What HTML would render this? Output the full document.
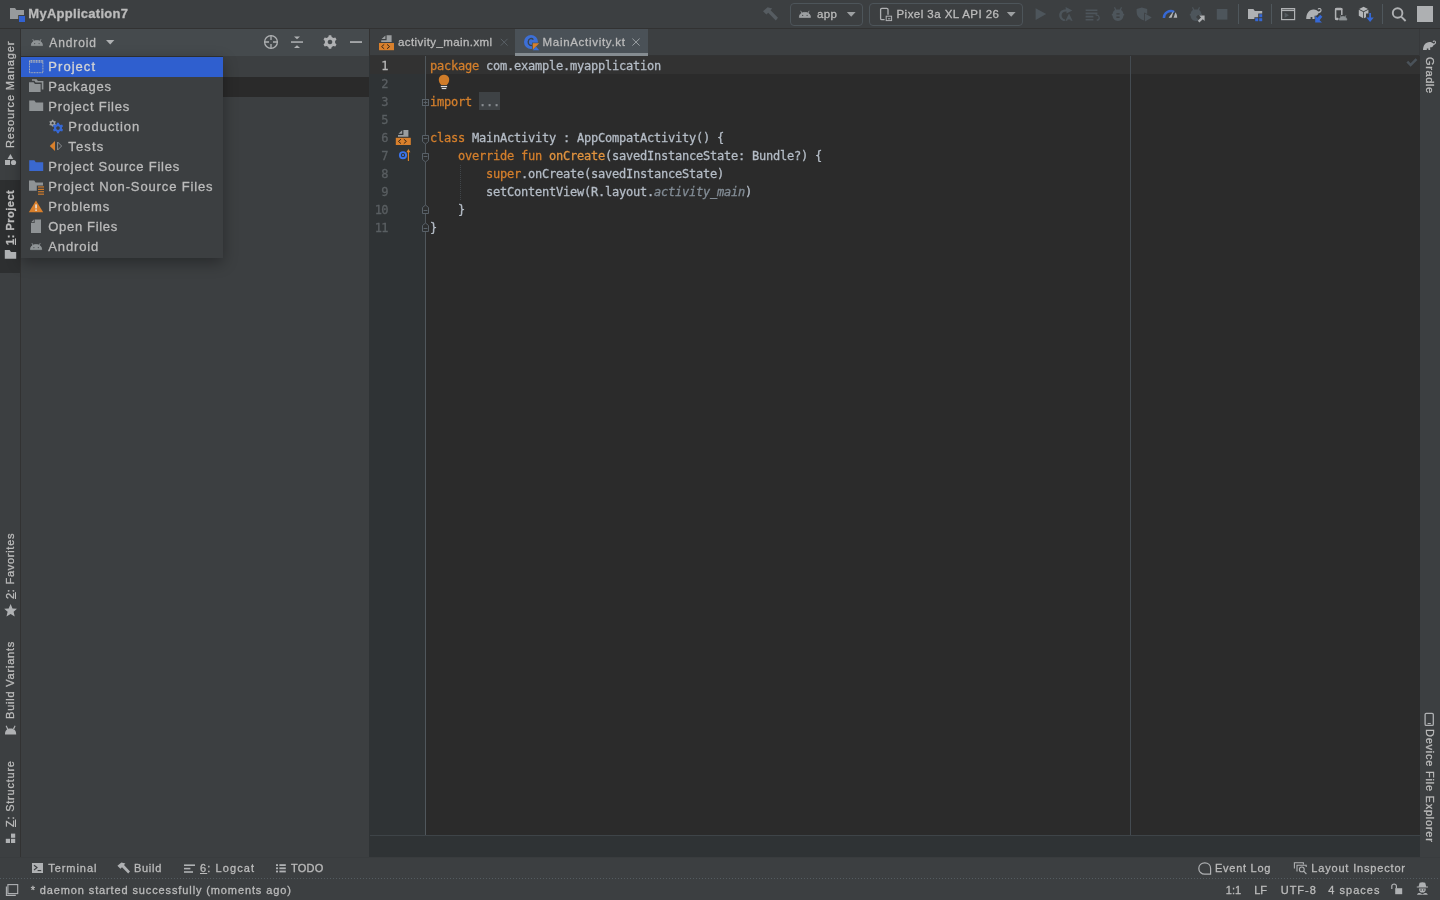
<!DOCTYPE html>
<html lang="en">
<head>
<meta charset="utf-8">
<title>MyApplication7 - MainActivity.kt</title>
<style>
*{box-sizing:border-box;margin:0;padding:0}
html,body{width:1440px;height:900px;overflow:hidden;background:#3c3f41}
body{position:relative;font-family:"Liberation Sans",sans-serif;font-size:12px;color:#bbbbbb;-webkit-font-smoothing:antialiased}
.abs{position:absolute}
.t{position:absolute;white-space:pre;line-height:1;-webkit-text-stroke:0.3px currentColor}
svg{position:absolute;overflow:visible}
/* frames */
#titlebar{left:0;top:0;width:1440px;height:28px;background:#3c3f41}
#titleline{left:0;top:28px;width:1440px;height:1px;background:#323232}
#lstripe{left:0;top:29px;width:20px;height:829px;background:#3c3f41}
#lstripeline{left:20px;top:29px;width:1px;height:829px;background:#323232}
#projtab{left:0;top:180px;width:20px;height:93px;background:#2d2f30}
#projhead{left:21px;top:29px;width:348px;height:27px;background:#454a4d}
#projbody{left:21px;top:56px;width:348px;height:802px;background:#3c3f41}
#projsel{left:21px;top:77px;width:348px;height:20px;background:#2a2a2a}
#projline{left:369px;top:29px;width:1px;height:27px;background:#323232}
#tabs{left:370px;top:29px;width:1050px;height:27px;background:#3c3f41}
#tabline{left:370px;top:55px;width:1050px;height:1px;background:#323334}
#tabsel{left:515px;top:29px;width:133px;height:27px;background:#4a5157}
#tabul{left:515px;top:53px;width:133px;height:3px;background:#858c91}
#gutter{left:369px;top:56px;width:57px;height:779px;background:#2f3335}
#gutline{left:425px;top:56px;width:1px;height:779px;background:#50575c}
#editor{left:426px;top:56px;width:994px;height:779px;background:#2b2b2b}
#curline{left:370px;top:56px;width:1050px;height:18px;background:#323232}
#foldbg{left:479px;top:92px;width:21px;height:18px;background:#3e4245}
#margin{left:1130px;top:56px;width:1px;height:779px;background:#444b51}
#edbottom{left:369px;top:835px;width:1051px;height:22px;background:#2f3335}
#edbottomline{left:370px;top:835px;width:1050px;height:1px;background:#3e4448}
#rstripe{left:1420px;top:29px;width:20px;height:829px;background:#3c3f41}
#rstripeline{left:1419px;top:29px;width:1px;height:27px;background:#37393b}
#bstripe{left:0;top:858px;width:1440px;height:21px;background:#3c3f41}
#bstripeline{left:0;top:857px;width:1440px;height:1px;background:#393c3e}
#status{left:0;top:879px;width:1440px;height:21px;background:#3c3f41}
#statusline{left:0;top:878px;width:1440px;height:1px;background:repeating-linear-gradient(90deg,#535b60 0 1px,#3c3f41 1px 3px)}
/* code */
.c{position:absolute;white-space:pre;line-height:18px;height:18px;margin-top:1px;-webkit-text-stroke:0.3px currentColor;left:430px;font-family:"DejaVu Sans Mono","Liberation Mono",monospace;font-size:12px;letter-spacing:-0.224px;color:#b4bcc6}
.ln{position:absolute;white-space:pre;line-height:18px;height:18px;margin-top:1px;-webkit-text-stroke:0.3px currentColor;width:30px;left:357.9px;text-align:right;font-family:"DejaVu Sans Mono","Liberation Mono",monospace;font-size:12px;letter-spacing:-0.6px;color:#5a5f62}
.k{color:#d47f2c}.f{color:#e0933f}.i{color:#828c95;font-style:italic}
/* popup */
#popshadow{left:21px;top:56px;width:202px;height:202px;box-shadow:0 5px 14px 0 rgba(0,0,0,.32)}
#popup{left:21px;top:56px;width:202px;height:202px;background:#3c3f41}
#poptop{left:21px;top:56px;width:202px;height:1px;background:#2c2e2f}
#popsel{left:21px;top:57px;width:202px;height:20px;background:#2f5fcf}
</style>
</head>
<body>
<div class="abs" id="titlebar"></div>
<div class="abs" id="titleline"></div>
<div class="abs" id="lstripe"></div>
<div class="abs" id="projtab"></div>
<div class="abs" id="lstripeline"></div>
<div class="abs" id="projhead"></div>
<div class="abs" id="projbody"></div>
<div class="abs" id="projsel"></div>
<div class="abs" id="projline"></div>
<div class="abs" id="tabs"></div>
<div class="abs" id="tabline"></div>
<div class="abs" id="tabsel"></div>
<div class="abs" id="tabul"></div>
<div class="abs" id="editor"></div>
<div class="abs" id="gutter"></div>
<div class="abs" id="curline"></div>
<div class="abs" id="gutline"></div>
<div class="abs" id="margin"></div>
<div class="abs" id="foldbg"></div>
<div class="abs" id="edbottom"></div>
<div class="abs" id="edbottomline"></div>
<div class="abs" id="rstripe"></div>
<div class="abs" id="rstripeline"></div>
<div class="abs" id="bstripe"></div>
<div class="abs" id="bstripeline"></div>
<div class="abs" id="status"></div>
<div class="abs" id="statusline"></div>
<div class="abs" id="popshadow"></div>
<div class="abs" id="popup"></div>
<div class="abs" id="poptop"></div>
<div class="abs" id="popsel"></div>
<div id="txt" style="position:absolute;left:0;top:0;width:1440px;height:900px;will-change:transform">
<span class="t" style="font-size:13px;letter-spacing:0.28px;color:#bbbbbb;font-weight:700;left:28.30px;top:7px;">MyApplication7</span>
<span class="t" style="font-size:12px;letter-spacing:0.89px;color:#bbbbbb;left:49.30px;top:37px;">Android</span>
<span class="t" style="font-size:13px;letter-spacing:1.04px;color:#d4d4d4;left:48.30px;top:60px;">Project</span>
<span class="t" style="font-size:13px;letter-spacing:0.8px;color:#bbbbbb;left:48.30px;top:80px;">Packages</span>
<span class="t" style="font-size:13px;letter-spacing:0.79px;color:#bbbbbb;left:48.30px;top:100px;">Project Files</span>
<span class="t" style="font-size:13px;letter-spacing:0.98px;color:#bbbbbb;left:68.30px;top:120px;">Production</span>
<span class="t" style="font-size:13px;letter-spacing:1.16px;color:#bbbbbb;left:68.30px;top:140px;">Tests</span>
<span class="t" style="font-size:13px;letter-spacing:0.77px;color:#bbbbbb;left:48.30px;top:160px;">Project Source Files</span>
<span class="t" style="font-size:13px;letter-spacing:0.86px;color:#bbbbbb;left:48.30px;top:180px;">Project Non-Source Files</span>
<span class="t" style="font-size:13px;letter-spacing:0.87px;color:#bbbbbb;left:48.30px;top:200px;">Problems</span>
<span class="t" style="font-size:13px;letter-spacing:0.68px;color:#bbbbbb;left:48.30px;top:220px;">Open Files</span>
<span class="t" style="font-size:13px;letter-spacing:0.86px;color:#bbbbbb;left:48.30px;top:240px;">Android</span>
<span class="t" style="font-size:11.5px;letter-spacing:0.41px;color:#bbbbbb;left:398.00px;top:37px;">activity_main.xml</span>
<span class="t" style="font-size:11.5px;letter-spacing:0.7px;color:#bbbbbb;left:542.50px;top:37px;">MainActivity.kt</span>
<span class="t" style="font-size:11.5px;letter-spacing:0.41px;color:#bbbbbb;left:817.00px;top:9px;">app</span>
<span class="t" style="font-size:11.5px;letter-spacing:0.45px;color:#bbbbbb;left:896.50px;top:9px;">Pixel 3a XL API 26</span>
<span class="t" style="font-size:11px;letter-spacing:0.93px;color:#bbbbbb;left:48.30px;top:863px;">Terminal</span>
<span class="t" style="font-size:11px;letter-spacing:0.71px;color:#bbbbbb;left:134.00px;top:863px;">Build</span>
<span class="t" style="font-size:11px;letter-spacing:1.09px;color:#bbbbbb;left:200.00px;top:863px;"><u>6</u>: Logcat</span>
<span class="t" style="font-size:11px;letter-spacing:0.24px;color:#bbbbbb;left:291.00px;top:863px;">TODO</span>
<span class="t" style="font-size:11px;letter-spacing:0.74px;color:#bbbbbb;left:1215.00px;top:863px;">Event Log</span>
<span class="t" style="font-size:11px;letter-spacing:0.83px;color:#bbbbbb;left:1311.25px;top:863px;">Layout Inspector</span>
<span class="t" style="font-size:11px;letter-spacing:0.88px;color:#bbbbbb;left:30.70px;top:885px;">* daemon started successfully (moments ago)</span>
<span class="t" style="font-size:11px;letter-spacing:0.1px;color:#bbbbbb;left:1225.75px;top:885px;">1:1</span>
<span class="t" style="font-size:11px;letter-spacing:-0.09px;color:#bbbbbb;left:1254.25px;top:885px;">LF</span>
<span class="t" style="font-size:11px;letter-spacing:0.96px;color:#bbbbbb;left:1280.75px;top:885px;">UTF-8</span>
<span class="t" style="font-size:11px;letter-spacing:1.03px;color:#bbbbbb;left:1328.25px;top:885px;">4 spaces</span>
<span class="t" style="font-size:11px;letter-spacing:0.85px;color:#bbbbbb;left:4.89px;top:148.30px;transform-origin:0 0;transform:rotate(-90deg);">Resource Manager</span>
<span class="t" style="font-size:11px;letter-spacing:0.51px;color:#bbbbbb;font-weight:700;left:5.09px;top:244.70px;transform-origin:0 0;transform:rotate(-90deg);"><u>1</u>: Project</span>
<span class="t" style="font-size:11px;letter-spacing:0.73px;color:#bbbbbb;left:4.89px;top:599.20px;transform-origin:0 0;transform:rotate(-90deg);"><u>2</u>: Favorites</span>
<span class="t" style="font-size:11px;letter-spacing:0.79px;color:#bbbbbb;left:4.89px;top:719.00px;transform-origin:0 0;transform:rotate(-90deg);">Build Variants</span>
<span class="t" style="font-size:11px;letter-spacing:0.77px;color:#bbbbbb;left:4.89px;top:826.70px;transform-origin:0 0;transform:rotate(-90deg);"><u>Z</u>: Structure</span>
<span class="t" style="font-size:11px;letter-spacing:0.63px;color:#bbbbbb;left:1434.71px;top:56.80px;transform-origin:0 0;transform:rotate(90deg);">Gradle</span>
<span class="t" style="font-size:11px;letter-spacing:0.76px;color:#bbbbbb;left:1435.01px;top:729.30px;transform-origin:0 0;transform:rotate(90deg);">Device File Explorer</span>
<span class="ln" style="top:56px;color:#b6b6b6">1</span>
<span class="ln" style="top:74px">2</span>
<span class="ln" style="top:92px">3</span>
<span class="ln" style="top:110px">5</span>
<span class="ln" style="top:128px">6</span>
<span class="ln" style="top:146px">7</span>
<span class="ln" style="top:164px">8</span>
<span class="ln" style="top:182px">9</span>
<span class="ln" style="top:200px">10</span>
<span class="ln" style="top:218px">11</span>
<span class="c" style="top:56px"><span class="k">package</span> com.example.myapplication</span>
<span class="c" style="top:92px"><span class="k">import</span> <span style="color:#8a8f93">...</span></span>
<span class="c" style="top:128px"><span class="k">class</span> MainActivity : AppCompatActivity() {</span>
<span class="c" style="top:146px">    <span class="k">override fun</span> <span class="f">onCreate</span>(savedInstanceState: Bundle?) {</span>
<span class="c" style="top:164px">        <span class="k">super</span>.onCreate(savedInstanceState)</span>
<span class="c" style="top:182px">        setContentView(R.layout.<span class="i">activity_main</span>)</span>
<span class="c" style="top:200px">    }</span>
<span class="c" style="top:218px">}</span>

</div>
<svg width="1440" height="900" viewBox="0 0 1440 900" style="left:0;top:0">
<defs>
<path id="droid" d="M0.5 7.6 C0.5 4.4 2.7 2.6 6.1 2.6 C9.5 2.6 11.7 4.4 11.7 7.6 Z M3 3.4 L1.9 1 M9.2 3.4 L10.3 1"/>
<path id="folder" d="M0 0 H5.2 L6.6 2 H14 V10.6 H0 Z"/>
<path id="gear" d="M-1.2 -6.8 H1.2 L1.7 -4.9 L3.4 -3.9 L5.3 -4.4 L6.5 -2.4 L5.1 -1 V1 L6.5 2.4 L5.3 4.4 L3.4 3.9 L1.7 4.9 L1.2 6.8 H-1.2 L-1.7 4.9 L-3.4 3.9 L-5.3 4.4 L-6.5 2.4 L-5.1 1 V-1 L-6.5 -2.4 L-5.3 -4.4 L-3.4 -3.9 L-1.7 -4.9 Z M0 -2.3 A2.3 2.3 0 1 0 0.01 -2.3 Z" fill-rule="evenodd"/>
</defs>
<!-- title: project folder -->
<g fill="#979a9c"><path d="M10 8 H15 L16.4 10 H24 V15 H18.2 V19 H10 Z"/></g>
<rect x="19" y="16" width="6" height="6" fill="#3262d2"/>
<!-- project header -->
<g transform="translate(30.8,38)"><use href="#droid" fill="#8e9395" stroke="#8e9395" stroke-width="0.8"/><circle cx="3.9" cy="5.6" r="0.55" fill="#454a4d"/><circle cx="8.3" cy="5.6" r="0.55" fill="#454a4d"/></g>
<path d="M106 40 H114.4 L110.2 44.6 Z" fill="#afb1b3"/>
<g fill="none" stroke="#afb1b3" stroke-width="1.3"><circle cx="271" cy="42" r="6.4"/><path d="M271 35.6 V40 M271 44 V48.4 M264.6 42 H269 M273 42 H277.4"/></g>
<g fill="#afb1b3"><rect x="291" y="41.3" width="12" height="1.5"/><path d="M294 36.4 H300 L297 39.2 Z"/><path d="M294 48 H300 L297 45.2 Z"/></g>
<use href="#gear" transform="translate(330,42)" fill="#afb1b3"/>
<rect x="350" y="41.2" width="12" height="1.7" fill="#afb1b3"/>
<!-- popup icons -->
<g fill="none" stroke="#b4b6b8" stroke-width="1"><rect x="29.5" y="60.5" width="13.4" height="12.2" stroke-dasharray="1 0.6"/><path d="M29.5 62 H43" stroke-width="1.6" stroke-dasharray="1 0.6"/></g>
<g fill="#8f9395"><path d="M29 82.2 H33.6 L34.9 84 H40.6 V92 H29 Z"/><path d="M32 79.2 H36.6 L37.9 81 H43.4 V89.4 H41.8 V82.6 H35.6 L34.4 80.8 H32 Z"/></g>
<use href="#folder" transform="translate(29.2,100.4)" fill="#8f9395"/>
<use href="#gear" transform="translate(52.6,123.2) scale(0.5)" fill="#9da0a2"/>
<use href="#gear" transform="translate(58,128) scale(0.78)" fill="#3668d4"/>
<path d="M55 141 V151 L49.8 146 Z" fill="#d9802c"/><path d="M57.6 142 L61.6 146 L57.6 150 Z" fill="none" stroke="#8a8e90" stroke-width="1"/>
<use href="#folder" transform="translate(29.2,160.3)" fill="#3a68cf"/>
<path d="M29 180.4 H34.2 L35.6 182.4 H43 V185.6 H36.8 V190.8 H29 Z" fill="#8f9395"/>
<g fill="#d9802c"><rect x="38" y="186.4" width="6" height="1.1"/><rect x="38" y="188.8" width="6" height="1.1"/><rect x="38" y="191.2" width="6" height="1.1"/><rect x="38" y="193.6" width="6" height="1.1"/></g>
<path d="M36 200.6 L43.2 212.2 H28.8 Z" fill="#d9802c"/><rect x="35.3" y="204.4" width="1.5" height="4" fill="#e8e8e8"/><rect x="35.3" y="209.4" width="1.5" height="1.5" fill="#e8e8e8"/>
<path d="M34.6 219.4 H41 V233 H31 V223 H34.6 Z M33.8 219.6 L31.2 222.2 H33.8 Z" fill="#8f9395"/>
<g transform="translate(30,242)"><use href="#droid" fill="#8e9395" stroke="#8e9395" stroke-width="0.8"/><circle cx="3.9" cy="5.6" r="0.55" fill="#3c3f41"/><circle cx="8.3" cy="5.6" r="0.55" fill="#3c3f41"/></g>
<!-- toolbar -->
<g fill="#565c61"><path d="M767.6 7.2 L772.2 8.6 L770.6 10.2 L778 17.8 L775.8 20.4 L768.2 12.8 L766.4 14.6 L763 11.2 Z"/></g>
<g fill="none" stroke="#4d555a" stroke-width="1"><rect x="790.5" y="3.5" width="72" height="22" rx="3.5"/><rect x="869.5" y="3.5" width="153" height="22" rx="3.5"/></g>
<g transform="translate(798.8,9.8)"><use href="#droid" fill="#9da0a2" stroke="#9da0a2" stroke-width="0.8"/><circle cx="3.9" cy="5.6" r="0.55" fill="#3c3f41"/><circle cx="8.3" cy="5.6" r="0.55" fill="#3c3f41"/></g>
<path d="M846.8 12 H855.6 L851.2 16.8 Z" fill="#9da0a2"/>
<path d="M1006.8 12 H1015.6 L1011.2 16.8 Z" fill="#9da0a2"/>
<g fill="none" stroke="#afb1b3" stroke-width="1.3"><rect x="880.6" y="8.4" width="7.4" height="11.2" rx="1.2"/></g>
<rect x="884.6" y="14.8" width="8" height="7.4" fill="#3c3f41"/><rect x="886.2" y="16.2" width="5.4" height="4.4" fill="none" stroke="#afb1b3" stroke-width="1"/><rect x="888" y="18" width="2.4" height="1.4" fill="#8a8e90"/>
<g fill="#4d555b">
<path d="M1035.6 8.2 L1046.2 14 L1035.6 20 Z"/>
<path d="M1065.6 7 L1072.4 10.6 L1066.4 13.4 L1066.6 11.6 C1063.6 11.4 1061.6 12.8 1061.6 15.4 C1061.6 17.6 1063 18.9 1065 19.2 L1064.8 21 C1061.6 20.8 1059.2 18.6 1059.2 15.2 C1059.2 11.6 1061.8 9.2 1065.8 9.4 Z M1069 13.4 L1072.6 20.8 H1070.8 L1070.2 19.4 H1067.8 L1067.2 20.8 H1065.4 Z"/>
<path d="M1085.6 9.4 H1097.4 V11 H1085.6 Z M1085.6 12.6 H1097.4 V14.2 H1085.6 Z M1085.6 15.8 H1093.4 V17.4 H1085.6 Z M1085.6 19 H1093.4 V20.6 H1085.6 Z M1095.6 14.2 C1098.8 14.4 1100 16.2 1099.8 18.4 C1099.6 19.8 1098.6 20.6 1096.8 20.8 L1096.6 19.6 C1098 19.4 1098.6 18.8 1098.6 17.8 C1098.6 16.4 1097.6 15.6 1095.6 15.6 Z"/>
<path d="M1115 7 L1116.2 9.6 H1119.8 L1121 7 L1122 7.6 L1121 10 C1122.6 11 1123.4 12.6 1123.4 14 H1124.2 V15.6 H1123.4 C1123.4 18.6 1121.4 21 1118 21 C1114.6 21 1112.6 18.6 1112.6 15.6 H1111.8 V14 H1112.6 C1112.6 12.6 1113.4 11 1115 10 L1114 7.6 Z M1116.4 13.2 V14.6 H1119.6 V13.2 Z M1116.4 16.6 V18 H1119.6 V16.6 Z" fill-rule="evenodd"/>
<path d="M1136.6 9 L1141.8 7.6 L1147.2 9 V14 L1144.2 12.4 V20.4 L1142 19.8 C1138.6 18 1136.6 15.6 1136.6 12 Z M1145 13.6 L1151.8 17.6 L1145 21.6 Z"/>
<path d="M1193 7 L1194.2 9.6 H1197.8 L1199 7 L1200 7.6 L1199 10 C1200.6 11 1201.4 12.6 1201.4 14 H1202 V15 H1198 L1196 17 L1199 20 C1198 20.6 1197 21 1196 21 C1192.6 21 1190.6 18.6 1190.6 15.6 H1189.8 V14 H1190.6 C1190.6 12.6 1191.4 11 1193 10 L1192 7.6 Z"/>
<rect x="1216.8" y="9" width="10.6" height="10.6"/>
</g>
<path d="M1199.2 15.6 H1204.6 V21 L1202.8 19.2 L1199.4 22.4 L1197.8 20.8 L1201 17.4 Z" fill="#afb1b3"/>
<g fill="none" stroke-width="2.5"><path d="M1163.9 18 A6.9 6.9 0 0 1 1174.2 12" stroke="#3668d4"/></g>
<path d="M1168.6 17.8 L1173.8 10.6 L1171.6 17.8 Z" fill="#b4b6b8"/><path d="M1173.6 17.8 L1175.4 12.2 C1176.6 13.6 1177.2 15.6 1177.2 17.8 Z" fill="#afb1b3"/>
<g fill="#4f575c"><rect x="1238" y="4" width="1" height="20"/><rect x="1271" y="4" width="1" height="20"/><rect x="1382" y="4" width="1" height="20"/></g>
<path d="M1248 9 H1253.4 L1254.8 11 H1262.2 V13.4 H1258.2 V17.2 H1254.4 V19 H1248 Z" fill="#afb1b3"/>
<g fill="#3668d4"><rect x="1259.2" y="14.2" width="3" height="3"/><rect x="1255.2" y="18.2" width="3" height="3"/><rect x="1259.2" y="18.2" width="3" height="3"/></g>
<g fill="none" stroke="#afb1b3"><rect x="1281.6" y="8.6" width="13" height="11" stroke-width="1.2"/><path d="M1281.6 10.4 H1294.6" stroke-width="1.4"/></g>
<path d="M1284.6 12.6 L1289 15.2 L1284.6 17.8 Z" fill="#565c61"/>
<path d="M1306.2 19 C1306.4 13.4 1309 9.8 1313.4 9.6 C1315.4 9.4 1317 10.4 1318.2 11.6 C1319.8 11.8 1320.8 10.6 1320.4 9.6 C1320 8.8 1318.8 8.8 1318.6 9.6 L1317.6 9.2 C1318 7.6 1320.6 7.4 1321.4 9.2 C1322.2 11.2 1320.6 13.2 1318.6 13 C1318 15 1316.4 16 1314.6 15.8 V19 H1312.4 V17 H1310.6 V19 Z" fill="#afb1b3"/>
<path d="M1322.4 16.8 L1320.2 14.8 L1317.4 17.8 L1315.2 15.8 V22.6 H1322 L1319.6 20.2 Z" fill="#3668d4"/>
<g fill="none" stroke="#afb1b3" stroke-width="1.5"><path d="M1341.8 15 V9.6 Q1341.8 8.6 1340.8 8.6 H1336.6 Q1335.6 8.6 1335.6 9.6 V18.4 Q1335.6 19.4 1336.6 19.4 H1338"/></g><rect x="1335.2" y="8" width="7.2" height="2.2" rx="0.8" fill="#afb1b3"/><rect x="1335.2" y="17.8" width="3.4" height="2.2" rx="0.8" fill="#afb1b3"/>
<g transform="translate(1338.9,14.6) scale(0.68,0.72)"><use href="#droid" fill="#8e9396" stroke="#8e9396" stroke-width="1"/></g>
<g fill="#b4b6b8"><path d="M1363.6 6.8 L1368 9 L1363.6 11.2 L1359.2 9 Z"/><path d="M1358.8 9.8 L1363.2 12 V18.2 L1358.8 15.8 Z"/><path d="M1368.4 9.8 L1364 12 V18.2 L1366 17.2 V13.4 L1368.4 13.4 Z"/></g>
<path d="M1369.2 13 H1371 V17.6 H1373.8 L1370.1 22 L1366.4 17.6 H1369.2 Z" fill="#3668d4"/>
<g fill="none" stroke="#afb1b3" stroke-width="1.9"><circle cx="1397.6" cy="13" r="4.8"/><path d="M1401.2 16.6 L1405.6 21"/></g>
<rect x="1417" y="6" width="16" height="16" fill="#aeb0b2"/>
<!-- tabs -->
<g id="xmlA"><rect x="379" y="43" width="15" height="7.2" fill="#d9802c"/><path d="M384.2 44.4 L381.6 46.6 L384.2 48.8 M387 44.4 L389.6 46.6 L387 48.8" fill="none" stroke="#3a2a1a" stroke-width="1"/><path d="M386.6 35.2 H391.6 V42 H381.2 V40.2 H386.6 Z M385.4 35.4 V39 H381.6 Z" fill="#9a9d9f"/></g>
<g id="xmlB" transform="translate(16.8,94.8)"><rect x="379" y="43" width="15" height="7.2" fill="#d9802c"/><path d="M384.2 44.4 L381.6 46.6 L384.2 48.8 M387 44.4 L389.6 46.6 L387 48.8" fill="none" stroke="#3a2a1a" stroke-width="1"/><path d="M386.6 35.2 H391.6 V42 H381.2 V40.2 H386.6 Z M385.4 35.4 V39 H381.6 Z" fill="#9a9d9f"/></g>
<g fill="none" stroke="#596066" stroke-width="1"><path d="M500.8 38.8 L507.6 45.6 M507.6 38.8 L500.8 45.6"/></g>
<g fill="none" stroke="#a4a9ad" stroke-width="0.9"><path d="M632.4 38.6 L639.6 45.6 M639.6 38.6 L632.4 45.6"/></g>
<circle cx="531" cy="42" r="7" fill="#3d6fd6"/>
<path d="M533.4 39.6 C531.8 37.8 528.6 38.2 528.2 41.6 C527.8 45.2 531.2 46.4 533.4 44.8" fill="none" stroke="#39424f" stroke-width="1.35"/>
<path d="M532 42.6 H539.4 V50.2 H532 Z" fill="#4a5157"/><path d="M532.8 43.2 H539.2 L532.8 49.8 Z" fill="#d9802c"/><path d="M536 46.4 L539.2 50.2 H532.8 Z" fill="#3d6fd6"/>
<!-- editor gutter -->
<path d="M1406.4 62.6 L1408.2 60.8 L1410.6 63.2 L1415.6 58.2 L1417.4 60 L1410.6 66.8 Z" fill="#4a5259"/>
<g><path d="M444 74.8 C447.3 74.8 449.2 77 449.2 79.8 C449.2 82 448.1 83.6 446.7 85.1 H441.3 C439.900 83.6 438.8 82 438.8 79.8 C438.8 77 440.7 74.8 444 74.8 Z" fill="#d07c29"/><rect x="440.8" y="85.9" width="6.3" height="1.3" fill="#dcdcdc"/><rect x="441.7" y="88" width="4.6" height="1.1" fill="#dcdcdc"/></g>
<circle cx="403" cy="155.2" r="3.1" fill="none" stroke="#3b73ea" stroke-width="1.9"/><circle cx="403" cy="155.2" r="1.1" fill="#3b73ea"/>
<path d="M408.4 149 L410.4 152.2 H408.95 V161 H407.85 V152.2 H406.4 Z" fill="#e0852b"/>
<g fill="#2d2f30" stroke="#596168" stroke-width="1"><rect x="422.5" y="99.5" width="6" height="6"/><path d="M422.5 135.5 H428.5 V141.5 L425.5 144 L422.5 141.5 Z"/><path d="M422.5 153.5 H428.5 V159.5 L425.5 162 L422.5 159.5 Z"/><path d="M422.5 213.5 H428.5 V207.5 L425.5 205 L422.5 207.5 Z"/><path d="M422.5 231.5 H428.5 V225.5 L425.5 223 L422.5 225.5 Z"/></g>
<g stroke="#596168" stroke-width="1"><path d="M423.6 102.5 H427.4 M425.5 100.6 V104.4 M423.6 138.5 H427.4 M423.6 156.5 H427.4 M423.6 210.5 H427.4 M423.6 228.5 H427.4"/></g>
<path d="M460.5 165 V200" stroke="#41464a" stroke-width="1" stroke-dasharray="1 1"/>
<!-- left stripe -->
<g fill="#afb1b3"><path d="M10.4 154 L13.3 159 H7.5 Z"/><rect x="5" y="160" width="5" height="5"/><circle cx="13.5" cy="162.5" r="2.6"/>
<path d="M4.8 250 H9.6 L11 252 H16.2 V258.8 H4.8 Z"/>
<path d="M10.6 604 L12.5 608.4 L17 608.8 L13.6 611.8 L14.7 616.4 L10.6 614 L6.5 616.4 L7.6 611.8 L4.2 608.8 L8.7 608.4 Z"/>
<path d="M5 734.4 C5 730.6 7 728.6 10.6 728.6 C14.2 728.6 16.2 730.6 16.2 734.4 Z M7.2 729.4 L5.6 726 L6.6 725.6 L8.4 729 Z M14 729.4 L15.6 726 L14.6 725.6 L12.8 729 Z"/>
<rect x="11" y="833.6" width="4.2" height="4.2"/><rect x="5.8" y="838.8" width="4.2" height="4.2"/><rect x="11" y="838.8" width="4.2" height="4.2"/></g>
<!-- right stripe -->
<path d="M1423 50 C1423.2 45 1425.6 42.2 1429.4 42 C1431 41.9 1432.4 42.6 1433.4 43.6 C1434.6 43.6 1435.2 42.8 1435 42 C1434.7 41.3 1433.8 41.4 1433.6 42 L1432.6 41.7 C1433 40.2 1435.2 40 1435.9 41.6 C1436.6 43.4 1435.2 45 1433.6 44.9 C1433.1 46.6 1431.8 47.4 1430.2 47.2 V50 H1428.4 V48.4 H1426.8 V50 Z" fill="#afb1b3"/>
<rect x="1425.1" y="713.4" width="8.2" height="12" rx="1.2" fill="none" stroke="#afb1b3" stroke-width="1.3"/><rect x="1427.6" y="723" width="3.2" height="1" fill="#afb1b3"/>
<!-- bottom -->
<rect x="32" y="863" width="11" height="10" fill="#afb1b3"/><path d="M34 865.2 L37 867.6 L34 870" fill="none" stroke="#3c3f41" stroke-width="1.2"/><rect x="37.6" y="870" width="3.6" height="1.1" fill="#3c3f41"/>
<path d="M121.4 862.4 L125.4 863.6 L124 865 L130 871.4 L128.2 873.6 L122 867.2 L120.4 868.8 L117.4 865.8 Z" fill="#afb1b3"/>
<g fill="#afb1b3"><rect x="184" y="864.4" width="11" height="1.6"/><rect x="184" y="867.8" width="6.4" height="1.6"/><rect x="184" y="871.2" width="9" height="1.6"/>
<rect x="276" y="864.2" width="2" height="1.8"/><rect x="279.4" y="864.2" width="6.4" height="1.8"/><rect x="276" y="867.4" width="2" height="1.8"/><rect x="279.4" y="867.4" width="6.4" height="1.8"/><rect x="276" y="870.6" width="2" height="1.8"/><rect x="279.4" y="870.6" width="6.4" height="1.8"/></g>
<path d="M1204.8 874.2 C1201.4 874.2 1198.8 871.6 1198.8 868.4 C1198.8 865.2 1201.4 862.8 1204.8 862.8 C1208.2 862.8 1210.6 865.2 1210.6 868.4 V874.2 Z" fill="none" stroke="#afb1b3" stroke-width="1.2"/>
<g fill="none" stroke="#afb1b3" stroke-width="1.1"><path d="M1294.4 868.6 V862.8 H1303.4 V864.4"/><path d="M1297 871.4 V865.2 H1306.2 V867"/><circle cx="1301.8" cy="869.4" r="2.4"/><path d="M1303.6 871.2 L1306.4 874"/></g>
<!-- status -->
<g fill="none" stroke="#afb1b3" stroke-width="1.1"><rect x="7.9" y="884.6" width="9.8" height="9"/><path d="M6.4 886.6 V895.4 H15.8"/></g>
<g fill="#afb1b3"><rect x="1395.2" y="888.2" width="7" height="6"/><path d="M1391.2 889 V886 C1391.2 882.6 1397 882.6 1397 886 V888.4 H1395.8 V886 C1395.8 884.2 1392.4 884.2 1392.4 886 V889 Z"/>
<path d="M1418.6 886.4 L1419.6 882.8 C1421 882 1423.8 882 1425.2 882.8 L1426.2 886.4 H1428 V887.6 H1416.8 V886.4 Z M1419 888.4 H1425.8 C1425.8 891.6 1424.4 892.6 1422.4 892.6 C1420.4 892.6 1419 891.6 1419 888.4 Z M1417 894.8 C1417.4 893.2 1419 892.6 1420.4 893.2 L1422.4 894.2 L1424.4 893.2 C1425.800 892.6 1427.4 893.2 1427.800 894.8 Z"/></g>
<rect x="1420.4" y="889.4" width="1.4" height="1.2" fill="#3c3f41"/><rect x="1423" y="889.4" width="1.4" height="1.2" fill="#3c3f41"/>
<!--MORE-->
</svg>

</body>
</html>
